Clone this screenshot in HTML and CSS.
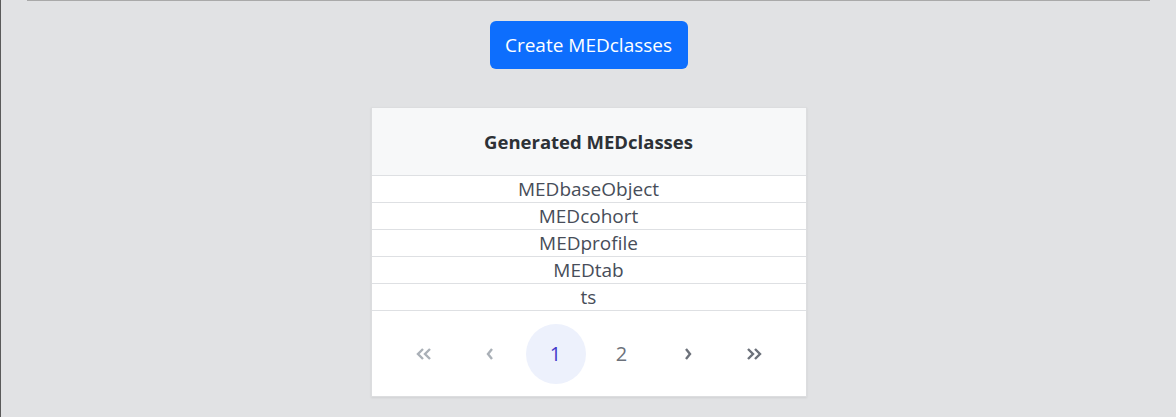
FILE: index.html
```html
<!DOCTYPE html>
<html lang="en">
<head>
<meta charset="utf-8">
<title>MEDclasses</title>
<link rel="stylesheet" href="styles.css">
</head>
<body>
<div class="page">
  <div class="topline"></div>
  <div class="actions">
    <button class="btn-create" type="button">Create MEDclasses</button>
  </div>
  <div class="card">
    <div class="card-header">Generated MEDclasses</div>
    <ul class="rows">
      <li>MEDbaseObject</li>
      <li>MEDcohort</li>
      <li>MEDprofile</li>
      <li>MEDtab</li>
      <li>ts</li>
    </ul>
    <nav class="pager">
      <span class="pg disabled"><svg class="dbl" width="18" height="14" viewBox="0 0 18 14"><polyline points="8,2 3,7 8,12" /><polyline points="15,2 10,7 15,12" /></svg></span>
      <span class="pg disabled"><svg class="sgl" width="10" height="14" viewBox="0 0 10 14"><polyline points="7,2 3,7 7,12" /></svg></span>
      <span class="pg active">1</span>
      <span class="pg">2</span>
      <span class="pg dark"><svg class="sgl" width="10" height="14" viewBox="0 0 10 14"><polyline points="3,2 7,7 3,12" /></svg></span>
      <span class="pg dark"><svg class="dbl" width="18" height="14" viewBox="0 0 18 14"><polyline points="3,2 8,7 3,12" /><polyline points="10,2 15,7 10,12" /></svg></span>
    </nav>
  </div>
</div>
</body>
</html>
```
FILE: styles.css
```css
html, body {
  margin: 0;
  padding: 0;
  height: 100%;
}
body {
  background: #e1e2e4;
  font-family: "Open Sans", "Noto Sans", sans-serif;
  border-left: 1px solid #5a5a5a;
  box-sizing: border-box;
}
.page {
  display: flex;
  flex-direction: column;
  align-items: center;
}
.topline {
  align-self: stretch;
  margin: 0 26px 0 26px;
  height: 1px;
  background: #a9a9a9;
}
.actions {
  margin-top: 20px;
}
.btn-create {
  background: #0d6efd;
  color: #fff;
  border: none;
  border-radius: 6px;
  font-family: inherit;
  font-size: 19px;
  width: 198px;
  height: 48px;
  padding: 0;
}
.card {
  margin-top: 38px;
  width: 436px;
  box-sizing: border-box;
  background: #fff;
  border: 1px solid #dcdddf;
  box-shadow: 0 1px 2px rgba(0,0,0,0.08);
}
.card-header {
  height: 67px;
  background: #f7f8f9;
  display: flex;
  align-items: center;
  justify-content: center;
  font-weight: 700;
  font-size: 18.5px;
  color: #2d3136;
  border-bottom: 1px solid #dee0e3;
}
.rows {
  list-style: none;
  margin: 0;
  padding: 0;
}
.rows li {
  height: 26px;
  line-height: 26px;
  text-align: center;
  font-size: 19px;
  color: #474d59;
  border-bottom: 1px solid #dee0e3;
}
.pager {
  height: 85px;
  display: flex;
  align-items: center;
  justify-content: center;
  gap: 6px;
}
.pg {
  width: 60px;
  height: 60px;
  border-radius: 50%;
  display: flex;
  align-items: center;
  justify-content: center;
  font-size: 20px;
  color: #6c717a;
}
.pg svg {
  display: block;
}
.pg svg polyline {
  fill: none;
  stroke: #6c717a;
  stroke-width: 2.4;
}
.pg.disabled svg polyline {
  stroke: #aab0b7;
}
.pg.active {
  background: #edf1fc;
  color: #4338ca;
}
```
